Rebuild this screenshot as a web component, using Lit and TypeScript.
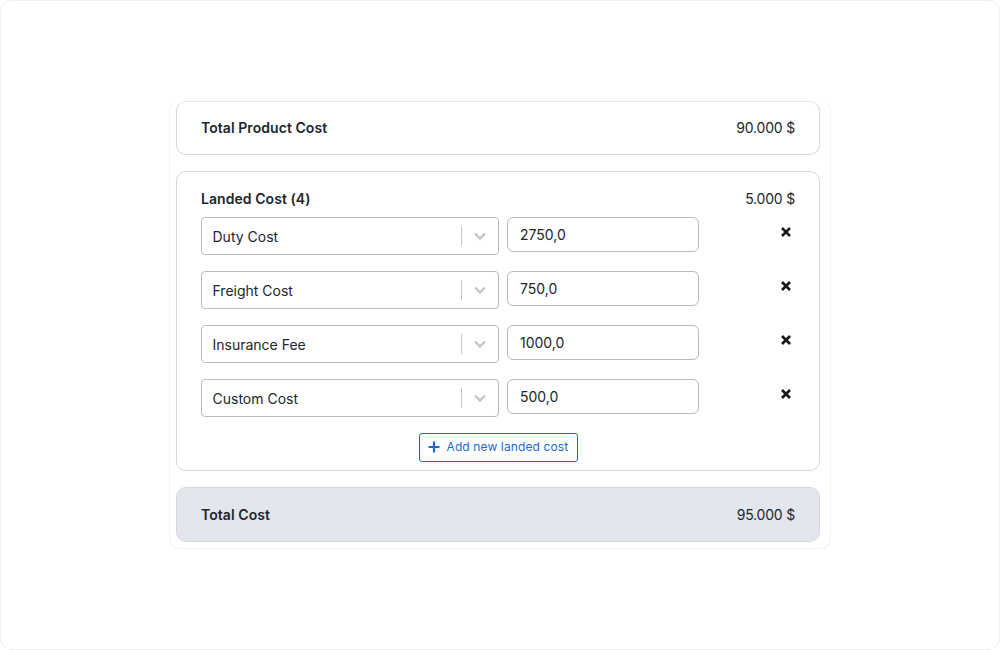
import { LitElement, html, css, svg } from "lit";
import { customElement } from "lit/decorators.js";

const rows = [
  ["Duty Cost", "2750,0"],
  ["Freight Cost", "750,0"],
  ["Insurance Fee", "1000,0"],
  ["Custom Cost", "500,0"],
];

@customElement("app-root")
export class AppRoot extends LitElement {
  static styles = css`
    :host { display: block; width: 1000px; height: 650px; box-sizing: border-box; background: #fff;
      font-family: Inter, "Liberation Sans", sans-serif; font-size: 14px; color: #22252c; }
    * { box-sizing: border-box; }
    .frame { width: 1000px; height: 650px; border: 1px solid #eeeff1; border-radius: 12px; padding-top: 99px; display: flex; justify-content: center; align-items: flex-start; }
    .panel { width: 662px; height: 449px; border: 1px solid #f1f2f4; border-top-color: transparent; border-radius: 10px; padding: 0 10px 6px 6px; display: flex; flex-direction: column; gap: 16px; }
    .card { border: 1px solid #d5d8df; border-radius: 10px; padding: 0 24px; background: #fff; }
    .line { display: flex; justify-content: space-between; align-items: center; }
    .summary { height: 54px; }
    .summary.top { border-top-color: #e6e8ec; }
    .total { height: 55px; background: #e3e6ec; }
    .label { font-weight: 600; line-height: 20px; letter-spacing: 0.06px; }
    .amount { line-height: 20px; letter-spacing: -0.2px; }
    .landed { height: 300px; padding-top: 17px; }
    .rows { margin-top: 8px; display: flex; flex-direction: column; gap: 16px; }
    .row { display: flex; align-items: flex-start; gap: 8px; height: 38px; }
    .select { width: 298px; height: 38px; border: 1px solid #b9bbc2; border-radius: 4px; display: flex; align-items: center; padding-left: 10.5px; }
    .select span { flex: 1; padding-top: 1px; }
    .sep { width: 1px; height: 20px; background: #c4c5c9; }
    .chev { width: 36px; display: flex; justify-content: center; }
    .chev svg { width: 14px; height: 14px; display: block; }
    .input { width: 192px; height: 35px; border: 1px solid #b9bbc2; border-radius: 6px; display: flex; align-items: center; padding-left: 12px; }
    .remove { margin-left: auto; margin-right: 2.5px; width: 14px; height: 30px; display: flex; align-items: center; justify-content: center; }
    .remove svg { width: 12px; height: 12px; display: block; }
    .foot { display: flex; justify-content: center; margin-top: 16px; }
    .add { height: 29px; width: 159px; border: 1px solid #1a6ad6; border-radius: 3px; display: flex; align-items: center; padding: 0 0 2px 8px; gap: 7px; color: #1a6ad6; font-size: 12px; letter-spacing: 0.12px; background: #fff; }
    .add svg { width: 12px; height: 12px; display: block; }
  `;

  render() {
    return html`<div class="frame"><div class="panel">
      <div class="card line summary top"><span class="label">Total Product Cost</span><span class="amount">90.000 $</span></div>
      <div class="card landed">
        <div class="line"><span class="label">Landed Cost (4)</span><span class="amount">5.000 $</span></div>
        <div class="rows">
          ${rows.map(([name, val]) => html`<div class="row">
            <div class="select"><span>${name}</span><i class="sep"></i>
              <div class="chev"><svg viewBox="0 0 14 14">${svg`<path d="M2 4.5 7 9.5 12 4.5" fill="none" stroke="#c6c6c8" stroke-width="2.4"/>`}</svg></div>
            </div>
            <div class="input">${val}</div>
            <div class="remove"><svg viewBox="0 0 12 12">${svg`<path d="M2 2 10 10M10 2 2 10" fill="none" stroke="#15171c" stroke-width="2.6"/>`}</svg></div>
          </div>`)}
        </div>
        <div class="foot"><div class="add"><svg viewBox="0 0 12 12">${svg`<path d="M6 .5V11.5M.5 6H11.5" fill="none" stroke="#1a6ad6" stroke-width="2.2"/>`}</svg>Add new landed cost</div></div>
      </div>
      <div class="card line total"><span class="label">Total Cost</span><span class="amount">95.000 $</span></div>
    </div></div>`;
  }
}
